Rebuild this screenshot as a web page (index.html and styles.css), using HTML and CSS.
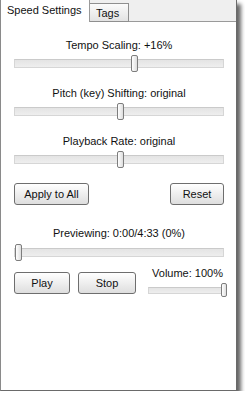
FILE: index.html
```html
<!DOCTYPE html>
<html>
<head>
<meta charset="utf-8">
<link rel="stylesheet" href="styles.css">
</head>
<body>
<div class="window">
  <div class="tabs">
    <div class="tab active">Speed Settings</div>
    <div class="tab">Tags</div>
    <div class="tab-fill"></div>
  </div>
  <div class="panel">
    <div class="group">
      <div class="label">Tempo Scaling: +16%</div>
      <div class="slider"><div class="track"></div><div class="thumb" style="left:117px"></div></div>
    </div>
    <div class="group">
      <div class="label">Pitch (key) Shifting: original</div>
      <div class="slider"><div class="track"></div><div class="thumb" style="left:103px"></div></div>
    </div>
    <div class="group">
      <div class="label">Playback Rate: original</div>
      <div class="slider"><div class="track"></div><div class="thumb" style="left:103px"></div></div>
    </div>
    <div class="row actions">
      <button class="btn btn-apply">Apply to All</button>
      <button class="btn btn-reset">Reset</button>
    </div>
    <div class="group preview">
      <div class="label">Previewing: 0:00/4:33 (0%)</div>
      <div class="slider"><div class="track"></div><div class="thumb" style="left:1px"></div></div>
    </div>
    <div class="row transport">
      <div class="buttons">
        <button class="btn btn-play">Play</button>
        <button class="btn btn-stop">Stop</button>
      </div>
      <div class="volume">
        <div class="label">Volume: 100%</div>
        <div class="slider small"><div class="track"></div><div class="thumb" style="left:73px"></div></div>
      </div>
    </div>
  </div>
</div>
</body>
</html>
```
FILE: styles.css
```css
* { box-sizing: border-box; }
body {
  margin: 0;
  background: #fff;
  font-family: "Liberation Sans", Arial, sans-serif;
  font-size: 11px;
  color: #111;
}
.window {
  width: 237px;
  height: 391px;
  display: flex;
  flex-direction: column;
  box-shadow: 4px 4px 4px rgba(0,0,0,0.6);
}
.tabs {
  height: 22px;
  display: flex;
  align-items: flex-end;
  background: #efefef;
  border-right: 1px solid #6a6a6a;
}
.tab {
  height: 19px;
  line-height: 18px;
  padding-left: 6px;
  width: 39px;
  background: linear-gradient(#fbfbfb, #e3e3e3);
  border: 1px solid #8f8f8f;
  border-left: none;
  color: #111;
}
.tab.active {
  width: 90px;
  height: 22px;
  line-height: 21px;
  padding-left: 6px;
  background: #fff;
  border: none;
  border-left: 1px solid #8a8a8a;
  border-right: 1px solid #9a9a9a;
}
.tab-fill {
  flex: 1;
  height: 22px;
  border-bottom: 1px solid #9a9a9a;
}
.panel {
  flex: 1;
  background: #fff;
  border-left: 1px solid #8a8a8a;
  border-right: 1px solid #6a6a6a;
  border-bottom: 1px solid #6a6a6a;
  padding: 16px 12px 0 13px;
  display: flex;
  flex-direction: column;
}
.group {
  display: flex;
  flex-direction: column;
  gap: 3px;
  margin-bottom: 14px;
}
.label {
  height: 14px;
  line-height: 14px;
  text-align: center;
  white-space: nowrap;
}
.slider {
  position: relative;
  height: 17px;
  display: flex;
  align-items: center;
}
.track {
  width: 100%;
  height: 9px;
  background: linear-gradient(#e4e4e4, #eeeeee);
  border: 1px solid #d6d6d6;
  border-top-color: #cacaca;
}
.thumb {
  position: absolute;
  top: 0;
  width: 7px;
  height: 17px;
  border: 1px solid #7d7d7d;
  border-radius: 2px;
  background: linear-gradient(to right, #ffffff, #dedede);
}
.row {
  display: flex;
  justify-content: space-between;
}
.actions {
  margin-top: 1px;
  margin-bottom: 21px;
}
.btn {
  height: 22px;
  padding: 0;
  font-family: "Liberation Sans", Arial, sans-serif;
  font-size: 11px;
  color: #111;
  background: linear-gradient(#ffffff, #dedede);
  border: 1px solid #6e6e6e;
  border-radius: 3px;
}
.btn-apply { width: 75px; }
.btn-reset { width: 54px; }
.btn-play { width: 56px; }
.btn-stop { width: 58px; }
.preview {
  gap: 4px;
  margin-bottom: 5px;
}
.transport {
  align-items: flex-start;
  margin-right: -3px;
}
.buttons {
  display: flex;
  gap: 8px;
  margin-top: 6px;
}
.volume {
  width: 79px;
  display: flex;
  flex-direction: column;
  gap: 3px;
}
.slider.small {
  height: 14px;
}
.slider.small .track {
  height: 7px;
}
.slider.small .thumb {
  width: 6px;
  height: 14px;
}
```
